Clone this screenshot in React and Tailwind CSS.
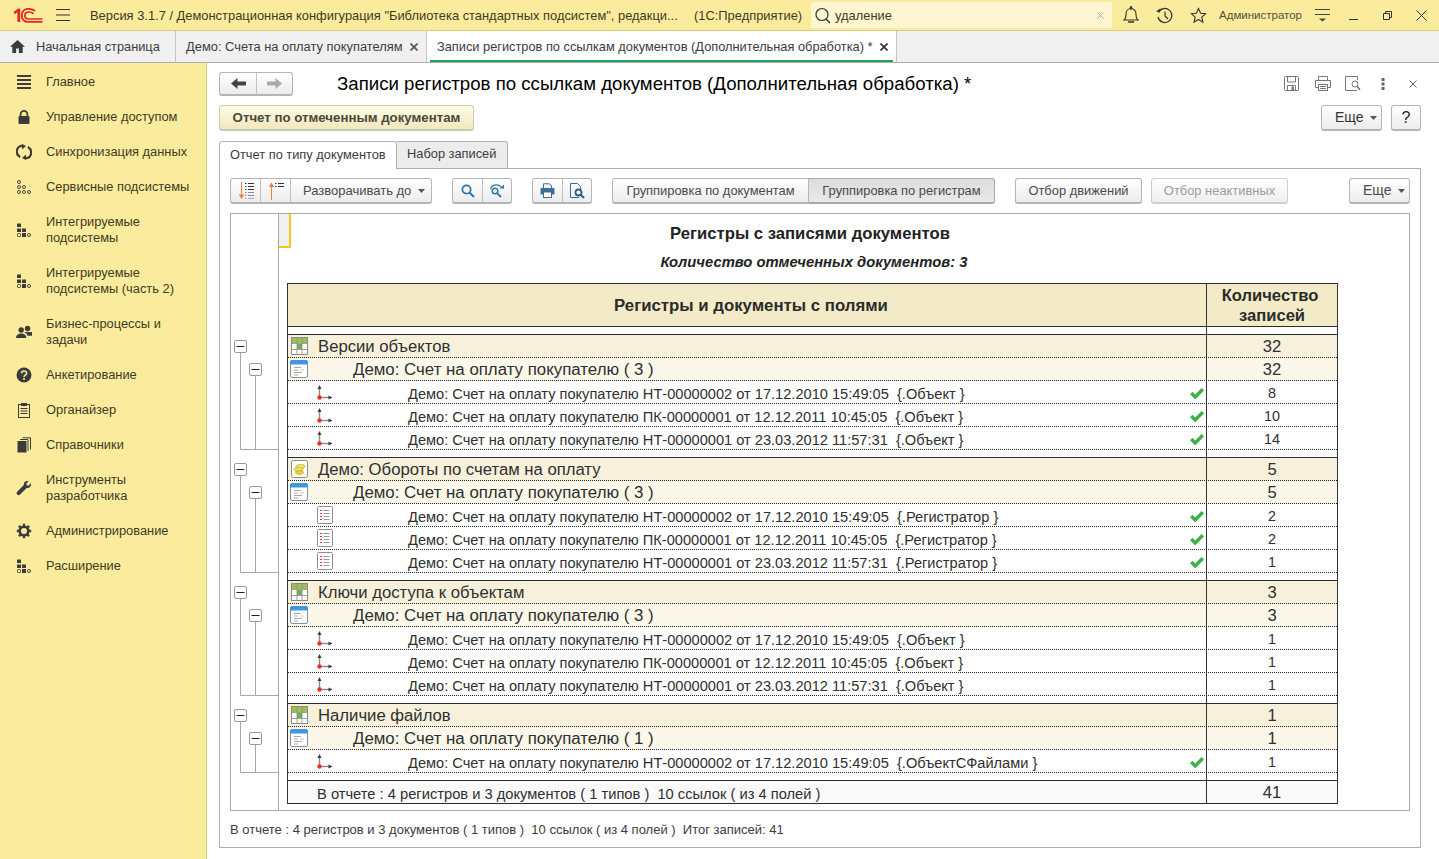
const DARK = "#3b3b3b";

function Ic({ w = 16, h = 16, children, className = "" }) {
  return (
    <svg width={w} height={h} viewBox={`0 0 ${w} ${h}`} fill="none" className={"shrink-0 " + className}>
      {children}
    </svg>
  );
}

function Logo() {
  return (
    <svg width="30" height="15" viewBox="0 0 30 15" fill="none" className="shrink-0">
      <path d="M0.500 4 L5 0.500 H7.200 V14 H4.400 V4.300 L1.600 6.300Z" fill="#e02a20" />
      <path d="M22 3 C20 1 17.500 .900 15 .900 C11 .900 8.800 4 8.800 7.500 C8.800 11 11 13.900 15 13.900 H29.500" stroke="#e02a20" strokeWidth="1.900" />
      <path d="M20.500 6 C19.500 4.500 17.800 4 15.800 4 C13.400 4 11.800 5.500 11.800 7.500 C11.800 9.600 13.400 11 15.800 11 H29.500" stroke="#e02a20" strokeWidth="1.700" />
    </svg>
  );
}

const sideIcons = {
  main: (
    <Ic>
      <path d="M1 2h14M1 6h14M1 10h14M1 14h14" stroke={DARK} strokeWidth="2" />
    </Ic>
  ),
  lock: (
    <Ic>
      <path d="M4.600 7V5.200a3.400 3.400 0 0 1 6.800 0V7" stroke={DARK} strokeWidth="1.700" />
      <rect x="2.500" y="7" width="11" height="8" rx="1" fill={DARK} />
    </Ic>
  ),
  sync: (
    <Ic>
      <path d="M6.500 1.600 A6 6 0 0 0 4.200 13" stroke={DARK} strokeWidth="2.200" />
      <path d="M9.500 14.400 A6 6 0 0 0 11.800 3" stroke={DARK} strokeWidth="2.200" />
      <path d="M6 0v5.500L10 2zM10 16v-5.500L6 14z" fill={DARK} />
    </Ic>
  ),
  dots: (
    <Ic>
      <g stroke={DARK} strokeWidth="1">
        <rect x="1.500" y="1.500" width="3" height="3" rx="1.400" />
        <rect x="1.500" y="6.500" width="3" height="3" rx="1.400" />
        <rect x="6.500" y="6.500" width="3" height="3" rx="1.400" />
        <rect x="1.500" y="11.500" width="3" height="3" rx="1.400" />
        <rect x="6.500" y="11.500" width="3" height="3" rx="1.400" />
        <rect x="11.500" y="11.500" width="3" height="3" rx="1.400" />
      </g>
    </Ic>
  ),
  dotsFilled: (
    <Ic>
      <rect x="1" y="1.500" width="4" height="3.500" fill={DARK} />
      <rect x="1" y="6.500" width="4" height="3.500" fill={DARK} />
      <rect x="6" y="6.500" width="4" height="3.500" fill={DARK} />
      <g stroke={DARK} strokeWidth="1">
        <rect x="1.500" y="11.500" width="3" height="3" rx=".800" />
        <rect x="6.500" y="11.500" width="3" height="3" fill={DARK} />
        <rect x="11.500" y="11.500" width="3" height="3" rx="1.400" />
      </g>
    </Ic>
  ),
  people: (
    <Ic>
      <circle cx="5.200" cy="6" r="2.700" fill={DARK} />
      <circle cx="11.600" cy="4.500" r="2.700" fill={DARK} />
      <path d="M0 14c0-3 2-4.600 5.200-4.600S10.400 11 10.400 14zM8 8h8v3.800h-4.600C11 10 9.800 9 8 8z" fill={DARK} />
    </Ic>
  ),
  question: (
    <Ic>
      <circle cx="8" cy="8" r="7.500" fill={DARK} />
      <path d="M5.500 6.300C5.500 4.800 6.600 4 8 4s2.600.800 2.600 2.200c0 2-2.600 2-2.600 3.800" stroke="#fbeb9e" strokeWidth="1.600" />
      <rect x="7.100" y="11" width="1.800" height="1.800" fill="#fbeb9e" />
    </Ic>
  ),
  org: (
    <Ic>
      <rect x="2.500" y="2.500" width="11" height="13" stroke={DARK} />
      <rect x="5" y="1" width="6" height="3" fill={DARK} />
      <path d="M4.500 6.500h7M4.500 9h7M4.500 11.500h7" stroke={DARK} />
    </Ic>
  ),
  book: (
    <Ic>
      <rect x="1.500" y="4" width="9" height="11.500" fill={DARK} />
      <path d="M12 14V2.500H4M14.500 12.500V.800H6.500" stroke={DARK} />
    </Ic>
  ),
  tool: (
    <Ic>
      <path d="M14.800 3.300 12 5.900 10 4.100 12.600 1.200C10 .400 7.500 2 7.800 5L1.200 11.800 C.300 12.800 .500 13.900 1.200 14.600 C2 15.400 3.200 15.400 4 14.600 L10.700 8 C13.600 8.400 15.800 6 14.800 3.300Z" fill={DARK} />
    </Ic>
  ),
  gear: (
    <Ic>
      <circle cx="8" cy="8" r="4.300" stroke={DARK} strokeWidth="2.600" />
      <path d="M8 .800v14.400M.800 8h14.400M2.900 2.900l10.200 10.200M13.100 2.900 2.900 13.100" stroke={DARK} strokeWidth="2.400" strokeDasharray="2.600 9.200" />
    </Ic>
  ),
};

const sideItems = [
  ["main", ["Главное"]],
  ["lock", ["Управление доступом"]],
  ["sync", ["Синхронизация данных"]],
  ["dots", ["Сервисные подсистемы"]],
  ["dotsFilled", ["Интегрируемые", "подсистемы"]],
  ["dotsFilled", ["Интегрируемые", "подсистемы (часть 2)"]],
  ["people", ["Бизнес-процессы и", "задачи"]],
  ["question", ["Анкетирование"]],
  ["org", ["Органайзер"]],
  ["book", ["Справочники"]],
  ["tool", ["Инструменты", "разработчика"]],
  ["gear", ["Администрирование"]],
  ["dotsFilled", ["Расширение"]],
];

function Sidebar() {
  return (
    <aside className="w-[207px] shrink-0 bg-[#fbec9d] border-r border-[#d6c97c] pt-px flex flex-col text-[12.850px] leading-[16px] text-[#3f3a22]">
      {sideItems.map(([ic, lines], i) => (
        <div key={i} className={"flex items-center pl-[16px] gap-[14px] " + (lines.length > 1 ? "h-[51px]" : "h-[35px]")}>
          {sideIcons[ic]}
          <div>
            {lines.map((l) => (
              <div key={l}>{l}</div>
            ))}
          </div>
        </div>
      ))}
    </aside>
  );
}

function TopBar() {
  return (
    <header className="h-[31px] shrink-0 bg-[#fbec9d] border-b border-[#d9cc7e] flex items-center text-[12.900px] text-[#3f3a22]">
      <div className="pl-[13px] w-[56px]">
        <Logo />
      </div>
      <svg width="14" height="12" viewBox="0 0 14 12" className="shrink-0">
        <path d="M0 .500h14M0 6h14M0 11.500h14" stroke="#333" />
      </svg>
      <div className="ml-[20px] w-[589px] pt-px whitespace-nowrap">
        Версия 3.1.7 / Демонстрационная конфигурация "Библиотека стандартных подсистем", редакци...
      </div>
      <div className="ml-[15px] w-[110px] pt-px">(1С:Предприятие)</div>
      <div className="ml-[7px] w-[301px] h-[26px] rounded-[2px] bg-[#fdf6d1] flex items-center pl-[4px] pr-[8px]">
        <svg width="16" height="17" viewBox="0 0 16 17" fill="none" className="shrink-0">
          <circle cx="7" cy="7.500" r="6" stroke="#333" strokeWidth="1.200" />
          <path d="M11 12l4 4" stroke="#333" strokeWidth="1.500" />
        </svg>
        <span className="ml-[4px] pt-px">удаление</span>
        <svg width="7" height="7" viewBox="0 0 7 7" className="ml-auto shrink-0">
          <path d="M.500.500l6 6M6.500.500l-6 6" stroke="#aaa" />
        </svg>
      </div>
      <div className="ml-[11px] w-[16px]">
        <Ic h={18}>
          <path d="M1 14c2-1.500 2-3 2-6 0-3 2-5.500 5-5.500s5 2.500 5 5.500c0 3 0 4.500 2 6z" stroke="#333" strokeWidth="1.100" />
          <path d="M7.500.800h1v2h-1zM5 16h6" stroke="#333" strokeWidth="1.300" />
        </Ic>
      </div>
      <div className="ml-[17px] w-[17px]">
        <svg width="17" height="17" viewBox="0 0 17 17" fill="none">
          <path d="M2.500 5.500A7 7 0 1 1 2 10" stroke="#333" strokeWidth="1.200" />
          <path d="M0 4.500l4 .800.500-4z" fill="#333" />
          <path d="M9 4.500v4.500l3 3" stroke="#333" strokeWidth="1.200" />
        </svg>
      </div>
      <div className="ml-[17px] w-[17px]">
        <svg width="17" height="17" viewBox="0 0 17 17" fill="none">
          <path d="M8.500 1.500l2.100 4.700 5 .500-3.800 3.400 1.100 5L8.500 12.500 4.100 15.100l1.100-5L1.400 6.700l5-.500z" stroke="#333" strokeWidth="1.100" />
        </svg>
      </div>
      <div className="ml-[12px] w-[84px] text-[11.500px] text-[#55503a] whitespace-nowrap pt-px">Администратор</div>
      <svg width="15" height="13" viewBox="0 0 15 13" fill="none" className="ml-[12px] shrink-0">
        <path d="M0 .500h15M0 5.500h15" stroke="#444" />
        <path d="M4 9.500h7L7.500 12.500z" fill="#444" />
      </svg>
      <svg width="10" height="10" viewBox="0 0 10 10" className="ml-[19px] shrink-0">
        <path d="M0 9.500h9" stroke="#333" />
      </svg>
      <svg width="9" height="9" viewBox="0 0 9 9" fill="none" className="ml-[24px] shrink-0">
        <path d="M.500 2.500h6v6h-6zM2.500 2.500V.500h6v6h-2" stroke="#333" />
      </svg>
      <svg width="11" height="11" viewBox="0 0 11 11" className="ml-[24px] shrink-0">
        <path d="M.500.500l10 10M10.500.500l-10 10" stroke="#333" />
      </svg>
    </header>
  );
}

function Cross({ color = "#444" }) {
  return (
    <svg width="8" height="8" viewBox="0 0 8 8" className="shrink-0">
      <path d="M.500.500l7 7M7.500.500l-7 7" stroke={color} strokeWidth="1.700" />
    </svg>
  );
}

function TabsBar() {
  return (
    <div className="h-[32px] shrink-0 bg-[#f0f0f0] border-b border-[#aeaeae] flex text-[12.800px] text-[#3c3c3c]">
      <div className="w-[176px] flex items-center pl-[10px] gap-[11px] border-r border-[#c4c4c4]">
        <svg width="15" height="13" viewBox="0 0 15 13" className="shrink-0">
          <path d="M7.500 0L0 6.800h2.300V13h3.800V8.500h2.800V13h3.800V6.800H15z" fill="#3b3b3b" />
        </svg>
        <span>Начальная страница</span>
      </div>
      <div className="w-[251px] flex items-center pl-[10px] border-r border-[#c4c4c4]">
        <span className="text-[12.880px]">Демо: Счета на оплату покупателям</span>
        <span className="ml-[7px]">
          <Cross color="#555" />
        </span>
      </div>
      <div className="w-[470px] bg-white flex items-center pl-[10px] border-r border-[#c4c4c4] relative">
        <span className="whitespace-nowrap">Записи регистров по ссылкам документов (Дополнительная обработка) *</span>
        <span className="ml-[8px]">
          <Cross color="#333" />
        </span>
        <div className="absolute left-[3px] right-[3px] bottom-0 h-[2px] bg-[#1e9e5a]" />
      </div>
    </div>
  );
}

function Btn({ children, className = "", disabled, pressed, yellow }) {
  const skin = pressed
    ? "bg-linear-to-b from-[#dcdcdc] to-[#e9e9e9] border-[#a9a9a9]"
    : yellow
    ? "bg-linear-to-b from-[#fffbe6] to-[#f2e8bf] border-[#c9c9b5] font-bold"
    : disabled
    ? "bg-linear-to-b from-white to-[#efefef] border-[#cfcfcf] text-[#9c9c9c]"
    : "bg-linear-to-b from-white to-[#ececec] border-[#b5b5b5]";
  return (
    <div className={"flex items-center justify-center rounded-[3px] border border-b-2 whitespace-nowrap " + skin + " " + className}>
      {children}
    </div>
  );
}

function Caret() {
  return (
    <svg width="7" height="4" viewBox="0 0 7 4" className="shrink-0">
      <path d="M0 0h7L3.500 4z" fill="#555" />
    </svg>
  );
}

function MoreBtn() {
  return (
    <Btn className="w-[61px] !justify-start pl-[13px] gap-[6px] text-[14px]">
      Еще <Caret />
    </Btn>
  );
}

function SortDown() {
  return (
    <svg width="16" height="18" viewBox="0 0 16 18" fill="none">
      <path d="M3.500 0v15" stroke="#ef7d3c" />
      <path d="M.800 12.500h5.400L3.500 17z" fill="#ef7d3c" />
      <path d="M7 1.500h1.500M10 1.500h6M7 4.500h1.500M10 4.500h6M7 7.500h1.500M10 7.500h6" stroke="#333" />
      <path d="M7 10.500h1.500M10 10.500h6M7 13.500h1.500M10 13.500h6" stroke="#888" />
      <path d="M7 16.500h1.500M10 16.500h6" stroke="#aaa" />
    </svg>
  );
}

function SortUp() {
  return (
    <svg width="16" height="18" viewBox="0 0 16 18" fill="none">
      <path d="M3.500 3v15" stroke="#ef7d3c" />
      <path d="M.800 5h5.400L3.500 .500z" fill="#ef7d3c" />
      <path d="M7 1.500h1.500M10 1.500h6M7 4.500h1.500M10 4.500h6" stroke="#333" />
    </svg>
  );
}

function Magnifier() {
  return (
    <svg width="14" height="14" viewBox="0 0 14 14" fill="none">
      <circle cx="5.500" cy="5.500" r="4.200" stroke="#2e75a8" strokeWidth="1.700" />
      <path d="M8.500 8.500l4.500 4.500" stroke="#2e75a8" strokeWidth="2" />
    </svg>
  );
}

function MagnifierRefresh() {
  return (
    <svg width="15" height="14" viewBox="0 0 15 14" fill="none">
      <path d="M.500 5C1.500 2 4 .800 6.500.800c2 0 3.500.800 4.500 2" stroke="#2e75a8" strokeWidth="1.200" />
      <path d="M9.500 4.500h4.500V.500z" fill="#2e75a8" />
      <circle cx="5" cy="7" r="2.800" stroke="#2e75a8" strokeWidth="1.500" />
      <path d="M7 9l4 4" stroke="#2e75a8" strokeWidth="1.800" />
    </svg>
  );
}

function Printer({ color = "#3d6d96" }) {
  return (
    <svg width="15" height="15" viewBox="0 0 15 15" fill="none">
      <path d="M3.500 5V.800H9.500L11.500 3v2" stroke={color} />
      <rect x=".500" y="5" width="14" height="6.500" rx="1" fill={color} />
      <rect x="3.500" y="9" width="8" height="5.500" fill="#fff" stroke={color} />
    </svg>
  );
}

function Preview() {
  return (
    <svg width="15" height="16" viewBox="0 0 15 16" fill="none">
      <path d="M9 14.500H.500V.500H7.500L10.500 3.500V6" stroke="#3d6d96" />
      <circle cx="8.500" cy="9.500" r="3" stroke="#2a5f8c" strokeWidth="1.800" />
      <path d="M10.500 11.500l3.500 3.500" stroke="#2a5f8c" strokeWidth="2" />
    </svg>
  );
}

function TitleRow() {
  return (
    <div className="flex items-center h-[23px] mt-[9px]">
      <div className="flex w-[74px] h-[24px] rounded-[3px] border border-b-2 border-[#b5b5b5] bg-linear-to-b from-white to-[#ececec]">
        <div className="w-[37px] flex items-center justify-center border-r border-[#c4c4c4]">
          <svg width="15" height="11" viewBox="0 0 15 11">
            <path d="M0 5.500L6.500 0v3.500H15v4H6.500V11z" fill="#444" />
          </svg>
        </div>
        <div className="flex-1 flex items-center justify-center">
          <svg width="15" height="11" viewBox="0 0 15 11">
            <path d="M15 5.500L8.500 0v3.500H0v4h8.500V11z" fill="#aaa" />
          </svg>
        </div>
      </div>
      <h1 className="ml-[44px] text-[18.650px] font-normal text-black whitespace-nowrap">
        Записи регистров по ссылкам документов (Дополнительная обработка) *
      </h1>
      <div className="ml-auto flex items-center">
        <svg width="15" height="15" viewBox="0 0 15 15" fill="none">
          <rect x=".500" y=".500" width="14" height="14" rx="1" stroke="#777" />
          <path d="M3.500 1v5h8V1M3.500 14V9.500h8V14" stroke="#777" />
          <rect x="7.500" y="10.500" width="2.500" height="3.500" fill="#777" />
        </svg>
        <svg width="16" height="15" viewBox="0 0 16 15" fill="none" className="ml-[16px]">
          <path d="M3.500 4.500V.500h9v4M3.500 11.500H.500v-7h15v7h-3" stroke="#777" />
          <rect x="3.500" y="8.500" width="9" height="6" stroke="#777" />
          <path d="M5 10.500h6M5 12.500h6" stroke="#777" />
        </svg>
        <svg width="16" height="15" viewBox="0 0 16 15" fill="none" className="ml-[14px]">
          <path d="M12 14.500H.500V.500H12.500V4" stroke="#777" />
          <circle cx="10" cy="8" r="3" stroke="#777" />
          <path d="M12 10l3 4" stroke="#777" strokeWidth="1.500" />
        </svg>
        <svg width="4" height="12" viewBox="0 0 4 12" className="ml-[20px]">
          <rect x=".500" width="3" height="3" fill="#666" />
          <rect x=".500" y="4.500" width="3" height="3" fill="#666" />
          <rect x=".500" y="9" width="3" height="3" fill="#666" />
        </svg>
        <svg width="8" height="8" viewBox="0 0 8 8" className="ml-[24px] mr-[4px]">
          <path d="M.500.500l7 7M7.500.500l-7 7" stroke="#666" />
        </svg>
      </div>
    </div>
  );
}

function Toolbar() {
  return (
    <div className="flex h-[26px] mt-[9px] mx-[10px] text-[12.900px] text-[#4a4a4a]">
      <div className="flex h-full w-[202px] rounded-[3px] border border-b-2 border-[#b5b5b5] bg-linear-to-b from-white to-[#ececec]">
        <div className="w-[30px] border-r border-[#c0c0c0] flex items-center justify-center"><SortDown /></div>
        <div className="w-[30px] border-r border-[#c0c0c0] flex items-center justify-center"><SortUp /></div>
        <div className="flex-1 flex items-center pl-[12px] gap-[7px] text-[13px]">
          <span className="whitespace-nowrap">Разворачивать до</span>
          <Caret />
        </div>
      </div>
      <div className="flex h-full w-[60px] ml-[20px] rounded-[3px] border border-b-2 border-[#b5b5b5] bg-linear-to-b from-white to-[#ececec]">
        <div className="w-[30px] border-r border-[#c0c0c0] flex items-center justify-center"><Magnifier /></div>
        <div className="flex-1 flex items-center justify-center"><MagnifierRefresh /></div>
      </div>
      <div className="flex h-full w-[60px] ml-[20px] rounded-[3px] border border-b-2 border-[#b5b5b5] bg-linear-to-b from-white to-[#ececec]">
        <div className="w-[30px] border-r border-[#c0c0c0] flex items-center justify-center"><Printer /></div>
        <div className="flex-1 flex items-center justify-center"><Preview /></div>
      </div>
      <div className="flex h-full w-[383px] ml-[20px]">
        <Btn className="w-[197px] rounded-r-none">Группировка по документам</Btn>
        <Btn pressed className="flex-1 rounded-l-none border-l-0">Группировка по регистрам</Btn>
      </div>
      <Btn className="w-[127px] ml-[20px]">Отбор движений</Btn>
      <Btn disabled className="w-[137px] ml-[9px]">Отбор неактивных</Btn>
      <div className="ml-auto flex">
        <MoreBtn />
      </div>
    </div>
  );
}

function TreeBlock({ height, lineEnd }) {
  const Box = ({ x, y }) => (
    <g>
      <rect x={x + 0.5} y={y + 0.5} width="12" height="12" rx="1.500" fill="#fff" stroke="#9a9a9a" />
      <path d={`M${x + 2.5} ${y + 6.5}h8`} stroke="#222" />
    </g>
  );
  return (
    <svg width="47" height={height} viewBox={`0 0 47 ${height}`} fill="none" className="block shrink-0">
      <path d={`M9.500 18V${lineEnd}.500H47M24.500 41V${lineEnd}.500`} stroke="#a8a8a8" />
      <Box x={3} y={5} />
      <Box x={18} y={28} />
    </svg>
  );
}

function GridIcon() {
  return (
    <svg width="17" height="18" viewBox="0 0 17 18" fill="none">
      <rect x=".500" y=".500" width="16" height="17" fill="#fff" stroke="#8a8a8a" />
      <rect x="1" y="1" width="15" height="5" fill="#9dc04f" />
      <rect x="6" y="7" width="5" height="5" fill="#6fb048" />
      <path d="M1 6.500h15M1 12.500h15M6 1v16M11 1v16" stroke="#8a8a8a" strokeWidth=".8" />
    </svg>
  );
}

function CoinIcon() {
  return (
    <svg width="17" height="18" viewBox="0 0 17 18" fill="none">
      <rect x=".500" y=".500" width="16" height="17" rx="2" fill="#fff" stroke="#8a8a8a" />
      <ellipse cx="9.500" cy="6.500" rx="4.500" ry="2" fill="#f3e27a" stroke="#c9a91e" strokeWidth=".8" />
      <ellipse cx="7.500" cy="9.500" rx="4.500" ry="2" fill="#f3e27a" stroke="#c9a91e" strokeWidth=".8" />
      <ellipse cx="8.500" cy="12.500" rx="4" ry="1.900" fill="#ebd23f" stroke="#c9a91e" strokeWidth=".8" />
    </svg>
  );
}

function FormIcon() {
  return (
    <svg width="18" height="18" viewBox="0 0 18 18" fill="none">
      <rect x=".500" y=".500" width="17" height="17" rx="1.500" fill="#fff" stroke="#7f93a6" />
      <path d="M.500 4V2a1.500 1.500 0 0 1 1.500-1.500h14A1.500 1.500 0 0 1 17.500 2v2z" fill="#3e97e0" stroke="#3e97e0" />
      <path d="M4 7.500h7M4 10h4M4 12.500h8M4 15h4" stroke="#a8a8a8" />
      <path d="M10 10h4" stroke="#ccc" />
    </svg>
  );
}

function AxesIcon() {
  return (
    <svg width="16" height="15" viewBox="0 0 16 15" fill="none">
      <path d="M2.500 12V3" stroke="#8a8a8a" strokeWidth="1.400" />
      <path d="M.500 4h4L2.500 0z" fill="#3a3a3a" />
      <path d="M4 12.500h8" stroke="#8a8a8a" strokeWidth="1.400" />
      <path d="M11.500 10.500V14.500L15.500 12.500z" fill="#3a3a3a" />
      <circle cx="2.500" cy="12.500" r="2.200" fill="#ee2f26" />
    </svg>
  );
}

function ListIcon() {
  return (
    <svg width="16" height="18" viewBox="0 0 16 18" fill="none">
      <rect x=".500" y=".500" width="15" height="17" rx="1" fill="#fff" stroke="#8f8f8f" />
      <path d="M3 4.500h2M3 7.500h2M3 10.500h2M3 13.500h2" stroke="#d23b33" />
      <path d="M6.500 4.500h6M6.500 7.500h6M6.500 10.500h6M6.500 13.500h6" stroke="#9a9a9a" />
    </svg>
  );
}

function Check() {
  return (
    <svg width="14" height="12" viewBox="0 0 14 12" className="shrink-0">
      <path d="M1.200 6l4 4L12.800 2.200" stroke="#3cb14a" strokeWidth="3.400" fill="none" />
    </svg>
  );
}

function Row({ bg = "", icon, iconX, textX, text, check, count, big, sub }) {
  const size = big ? (sub ? "text-[16.850px] pt-[2px]" : "text-[16.700px] pt-[2px]") : "text-[14.620px] pt-[4px]";
  return (
    <div className={"flex h-[23px] border-b border-dotted border-[#222] " + bg}>
      <div className="relative flex items-center w-[919px] border-r border-[#333] shrink-0">
        <div className="absolute top-0 bottom-0 flex items-center" style={{ left: iconX }}>{icon}</div>
        <span className={"whitespace-pre leading-none " + size} style={{ marginLeft: textX }}>
          {text}
        </span>
        {check && <div className="absolute right-[2px] top-[6px]"><Check /></div>}
      </div>
      <div className={"flex-1 flex items-center justify-center " + (big ? "text-[16.600px] pt-[2px]" : "text-[14.300px] pt-[4px]")}>{count}</div>
    </div>
  );
}

function Spacer() {
  return (
    <div className="flex h-[8px] border-[#2b2b2b] border-b">
      <div className="w-[919px] border-r border-[#333] shrink-0" />
    </div>
  );
}

const docTitles = [
  "Демо: Счет на оплату покупателю НТ-00000002 от 17.12.2010 15:49:05  ",
  "Демо: Счет на оплату покупателю ПК-00000001 от 12.12.2011 10:45:05  ",
  "Демо: Счет на оплату покупателю НТ-00000001 от 23.03.2012 11:57:31  ",
];

const groups = [
  { name: "Версии объектов", icon: <GridIcon />, total: 32, n: 3, field: "{.Объект }", di: <AxesIcon />, docs: [[0, 8, 1], [1, 10, 1], [2, 14, 1]] },
  { name: "Демо: Обороты по счетам на оплату", icon: <CoinIcon />, total: 5, n: 3, field: "{.Регистратор }", di: <ListIcon />, docs: [[0, 2, 1], [1, 2, 1], [2, 1, 1]] },
  { name: "Ключи доступа к объектам", icon: <GridIcon />, total: 3, n: 3, field: "{.Объект }", di: <AxesIcon />, docs: [[0, 1, 0], [1, 1, 0], [2, 1, 0]] },
  { name: "Наличие файлов", icon: <GridIcon />, total: 1, n: 1, field: "{.ОбъектСФайлами }", di: <AxesIcon />, docs: [[0, 1, 1]] },
];

function Report() {
  return (
    <div className="flex mt-[9px] mx-[10px] h-[598px] border border-[#a8a8a8] text-[#2f2f2f]">
      <div className="w-[48px] shrink-0 border-r border-[#a8a8a8] flex flex-col">
        <div className="h-[121px] shrink-0" />
        <TreeBlock height={123} lineEnd={114} />
        <TreeBlock height={123} lineEnd={114} />
        <TreeBlock height={123} lineEnd={114} />
        <TreeBlock height={77} lineEnd={68} />
      </div>
      <div className="flex-1 flex flex-col min-w-0">
        <div className="flex h-[34px]">
          <div className="w-[12px] bg-[#f0f0f0] border-r-2 border-b-2 border-[#f5c518]" />
          <div className="flex-1 flex items-center justify-center pt-[6px] pr-[80px] text-[16.700px] font-bold text-[#222]">
            Регистры с записями документов
          </div>
        </div>
        <div className="h-[35px] text-center text-[14.800px] italic font-bold text-[#222] pr-[60px] pt-[3px]">
          Количество отмеченных документов: 3
        </div>
        <div className="ml-[8px] w-[1051px] border-x border-[#333]">
          <div className="flex h-[44px] border-y border-[#2b2b2b] bg-[#f3ebc8] text-[16.800px] font-bold text-[#2b2b2b]">
            <div className="w-[919px] shrink-0 border-r border-[#333] flex items-center justify-center pl-[8px] pt-[1px]">
              Регистры и документы с полями
            </div>
            <div className="flex-1 text-center leading-[20px] pt-[2px] text-[16.600px]">
              <div className="pr-[4px]">Количество</div>
              <div>записей</div>
            </div>
          </div>
          <Spacer />
          {groups.map((g) => (
            <div key={g.name}>
              <Row big bg="bg-[#f7f1db]" icon={g.icon} iconX={3} textX={30} text={g.name} count={g.total} />
              <Row big sub bg="bg-[#fbf8ea]" icon={<FormIcon />} iconX={2} textX={65} text={`Демо: Счет на оплату покупателю ( ${g.n} )`} count={g.total} />
              {g.docs.map(([t, c, ch], i) => (
                <Row key={i} icon={g.di} iconX={29} textX={120} text={docTitles[t] + g.field} check={!!ch} count={c} />
              ))}
              <Spacer />
            </div>
          ))}
          <div className="flex h-[23px] border-b border-[#2b2b2b] bg-[#fafafa] text-[14.700px]">
            <div className="w-[919px] shrink-0 border-r border-[#333] flex items-center pl-[29px] pt-[5px] whitespace-pre">
              В отчете : 4 регистров и 3 документов ( 1 типов )  10 ссылок ( из 4 полей )
            </div>
            <div className="flex-1 flex items-center justify-center pt-[3px] text-[16.600px]">41</div>
          </div>
        </div>
      </div>
    </div>
  );
}

export default function App() {
  return (
    <div className="w-[1439px] h-[859px] overflow-hidden flex flex-col bg-white font-['Liberation_Sans',Arial,sans-serif] text-[#333]">
      <TopBar />
      <TabsBar />
      <div className="flex-1 flex min-h-0">
        <Sidebar />
        <main className="flex-1 min-w-0 pl-[12px] pr-[18px]">
          <TitleRow />
          <div className="flex justify-between mt-[10px] h-[26px] text-[13px]">
            <Btn yellow className="w-[255px] text-[13.250px] text-[#4a4a3a]">Отчет по отмеченным документам</Btn>
            <div className="flex gap-[9px]">
              <MoreBtn />
              <Btn className="w-[30px] text-[16px] text-[#222]">?</Btn>
            </div>
          </div>
          <div className="flex h-[28px] mt-[10px] text-[12.830px] relative -mb-px">
            <div className="w-[178px] border border-b-0 border-[#b0b0b0] rounded-t-[3px] bg-white flex items-center pl-[10px] pb-[2px] z-10 text-[#3c3c3c]">
              Отчет по типу документов
            </div>
            <div className="w-[111px] border border-l-0 border-[#b0b0b0] rounded-tr-[3px] bg-[#ececec] flex items-center pl-[10px] pb-[2px] text-[#3c3c3c]">
              Набор записей
            </div>
          </div>
          <div className="h-[680px] border border-[#b0b0b0] flex flex-col">
            <Toolbar />
            <Report />
            <div className="ml-[10px] mt-[9px] text-[13px] text-[#3c3c3c] whitespace-pre">
              В отчете : 4 регистров и 3 документов ( 1 типов )  10 ссылок ( из 4 полей )  Итог записей: 41
            </div>
          </div>
        </main>
      </div>
    </div>
  );
}
